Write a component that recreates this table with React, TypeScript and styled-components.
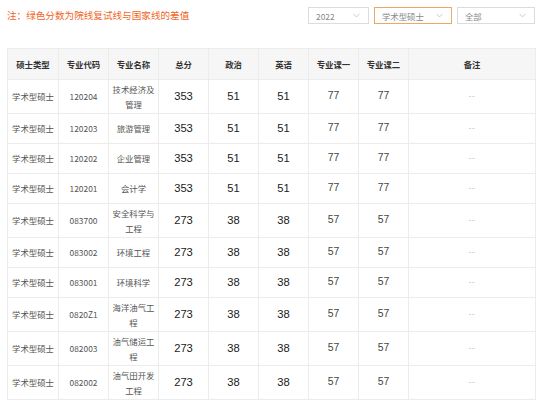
import React from "react";
import styled, { createGlobalStyle } from "styled-components";

const Global = createGlobalStyle`
  html, body { margin: 0; padding: 0; background: #fff; }
  body { font-family: "Noto Sans CJK SC", "Noto Sans", sans-serif; }
`;

const Page = styled.div`
  padding: 7px 6px 0 7px;
  width: 528px;
`;

const Toolbar = styled.div`
  display: flex;
  align-items: center;
  height: 17px;
  margin-bottom: 24px;
`;

const Note = styled.div`
  flex: 1;
  color: #f0651e;
  font-size: 9.6px;
  line-height: 17px;
  white-space: nowrap;
`;

const Selects = styled.div`
  display: flex;
  gap: 5px;
`;

const Select = styled.div<{ $w: number; $active?: boolean }>`
  box-sizing: border-box;
  width: ${(p) => p.$w}px;
  height: 17px;
  border: 1px solid ${(p) => (p.$active ? "#eca866" : "#dcdcdc")};
  display: flex;
  align-items: center;
  justify-content: space-between;
  padding: 0 8px 0 7px;
  font-size: 8.4px;
  color: #888;
  background: #fff;
`;

const Chevron = () => (
  <svg width="7" height="5" viewBox="0 0 7 5">
    <path d="M0.5 0.8 L3.5 4 L6.5 0.8" fill="none" stroke="#c8c8c8" strokeWidth="0.9" />
  </svg>
);

const Table = styled.table`
  border-collapse: collapse;
  table-layout: fixed;
  width: 528px;
  border: 1px solid #ececec;
`;

const Th = styled.th`
  height: 30px;
  padding: 0;
  background: #f6f6f6;
  border: 1px solid #ececec;
  font-size: 8.4px;
  font-weight: bold;
  color: #333;
  text-align: center;
`;

const Row = styled.tr`
  height: 30px;
`;

type Kind = "text" | "big" | "mid" | "note";

const Td = styled.td<{ $kind: Kind }>`
  padding: 2px 1px;
  border: 1px solid #ececec;
  text-align: center;
  line-height: 14.5px;
  font-weight: 400;
  letter-spacing: ${(p) => (p.$kind === "note" ? "0.5px" : "0")};
  font-size: ${(p) =>
    p.$kind === "big" ? "11.2px" : p.$kind === "mid" ? "10.4px" : p.$kind === "note" ? "8px" : "8.4px"};
  font-family: ${(p) =>
    p.$kind === "text"
      ? '"Noto Sans CJK SC", "Noto Sans", sans-serif'
      : '"Liberation Sans", Arial, sans-serif'};
  color: ${(p) =>
    p.$kind === "big" ? "#1a1a1a" : p.$kind === "mid" ? "#444" : p.$kind === "note" ? "#b5b5b5" : "#555"};
`;

const cols = [51, 50, 50, 50, 50, 50, 50, 50, 127];
const heads = ["硕士类型", "专业代码", "专业名称", "总分", "政治", "英语", "专业课一", "专业课二", "备注"];

const rows = [
  ["120204", "技术经济及管理", "353", "51", "51", "77", "77"],
  ["120203", "旅游管理", "353", "51", "51", "77", "77"],
  ["120202", "企业管理", "353", "51", "51", "77", "77"],
  ["120201", "会计学", "353", "51", "51", "77", "77"],
  ["083700", "安全科学与工程", "273", "38", "38", "57", "57"],
  ["083002", "环境工程", "273", "38", "38", "57", "57"],
  ["083001", "环境科学", "273", "38", "38", "57", "57"],
  ["0820Z1", "海洋油气工程", "273", "38", "38", "57", "57"],
  ["082003", "油气储运工程", "273", "38", "38", "57", "57"],
  ["082002", "油气田开发工程", "273", "38", "38", "57", "57"],
];

export default function App() {
  return (
    <Page>
      <Global />
      <Toolbar>
        <Note>注：绿色分数为院线复试线与国家线的差值</Note>
        <Selects>
          <Select $w={61}>
            <span>2022</span>
            <Chevron />
          </Select>
          <Select $w={78} $active>
            <span>学术型硕士</span>
            <Chevron />
          </Select>
          <Select $w={78}>
            <span>全部</span>
            <Chevron />
          </Select>
        </Selects>
      </Toolbar>
      <Table>
        <colgroup>
          {cols.map((w, i) => (
            <col key={i} style={{ width: w }} />
          ))}
        </colgroup>
        <thead>
          <tr>
            {heads.map((h) => (
              <Th key={h}>{h}</Th>
            ))}
          </tr>
        </thead>
        <tbody>
          {rows.map((r) => (
            <Row key={r[0]}>
              <Td $kind="text">学术型硕士</Td>
              <Td $kind="text">{r[0]}</Td>
              <Td $kind="text">{r[1]}</Td>
              <Td $kind="big">{r[2]}</Td>
              <Td $kind="big">{r[3]}</Td>
              <Td $kind="big">{r[4]}</Td>
              <Td $kind="mid">{r[5]}</Td>
              <Td $kind="mid">{r[6]}</Td>
              <Td $kind="note">--</Td>
            </Row>
          ))}
        </tbody>
      </Table>
    </Page>
  );
}
